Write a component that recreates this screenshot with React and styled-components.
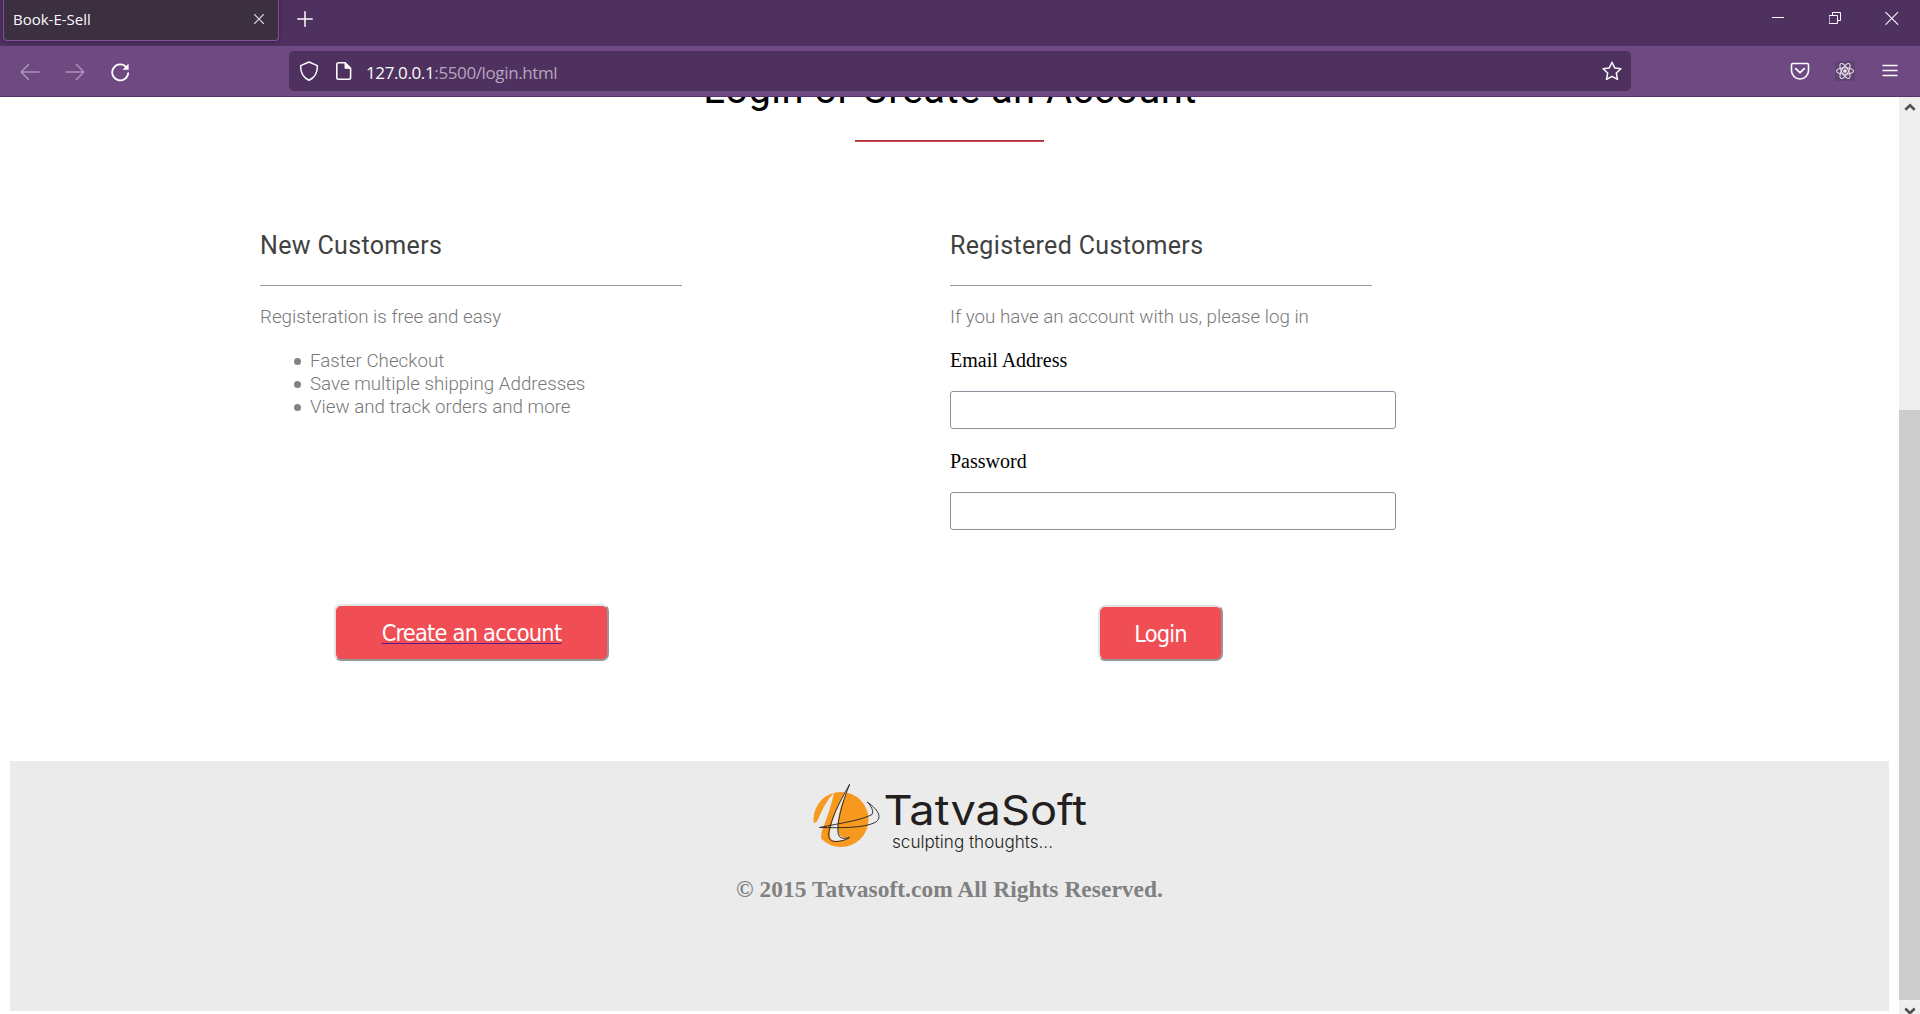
import React from 'react';
import styled, { createGlobalStyle } from 'styled-components';

const GlobalStyle = createGlobalStyle`
  *, *::before, *::after { box-sizing: border-box; }
  body { margin: 0; background: #fff; overflow: hidden; }
`;

const Window = styled.div`
  height: 1014px;
  display: flex;
  flex-direction: column;
  overflow: hidden;
  font-family: 'Liberation Serif', 'Times New Roman', serif;
  font-size: 20px;
  line-height: 23px;
`;

const TabStrip = styled.div`
  flex: none;
  height: 46px;
  display: flex;
  align-items: flex-start;
  justify-content: space-between;
  background: #4f315f;
`;

const TabGroup = styled.div`
  display: flex;
`;

const Tab = styled.div`
  width: 276px;
  height: 41px;
  margin-left: 3px;
  padding: 0 13px 3px 9px;
  display: flex;
  align-items: center;
  justify-content: space-between;
  background: #3b2f40;
  border: 1px solid #8350a0;
  border-top: 0;
  border-radius: 0 0 4px 4px;
  box-shadow: 0 0 5px rgba(0, 0, 0, 0.35);
  color: #fbfbfe;
  font: 15px/20px 'Open Sans', sans-serif;
`;

const NewTab = styled.div`
  margin: 11px 0 0 18px;
  display: flex;
`;

const WindowControls = styled.div`
  display: flex;
  gap: 43px;
  padding: 11px 21px 0 0;
`;

const NavBar = styled.div`
  flex: none;
  height: 51px;
  display: flex;
  align-items: center;
  padding: 0 20px 0 20px;
  background: #6f4a82;
  border-bottom: 1px solid #54346a;
`;

const NavButtons = styled.div`
  width: 269px;
  padding-top: 1px;
  display: flex;
  gap: 25px;
`;

const UrlBar = styled.div`
  width: 1342px;
  height: 40px;
  padding: 0 9px 0 10px;
  display: flex;
  align-items: center;
  background: #4f315f;
  border-radius: 5px;
`;

const UrlIcons = styled.div`
  display: flex;
  gap: 15px;
  width: 67px;
`;

const Url = styled.div`
  flex: 1;
  padding-top: 4px;
  color: #b7a4c0;
  font: 17px/24px 'Open Sans', sans-serif;
  letter-spacing: -0.38px;
`;

const Host = styled.span`
  color: #fbfbfe;
`;

const Tools = styled.div`
  margin-left: auto;
  display: flex;
  align-items: center;
  gap: 25px;
`;

const ExtensionBadge = styled.div`
  width: 20px;
  height: 20px;
  display: flex;
  border-radius: 2px;
  background: #5f4370;
`;

const Viewport = styled.div`
  flex: 1;
  min-height: 0;
  display: flex;
`;

const Page = styled.div`
  flex: 1;
  display: flex;
  flex-direction: column;
  padding: 0 10px;
  overflow: hidden;
`;

const TitleBlock = styled.div`
  flex: none;
  display: flex;
  flex-direction: column;
  align-items: center;
`;

const Title = styled.h1`
  margin: -29px 0 0;
  padding-left: 1px;
  font: 400 40px/44px Roboto, sans-serif;
  letter-spacing: 0.4px;
  color: #000;
`;

const TitleRule = styled.div`
  width: 189px;
  height: 2px;
  margin-top: 28px;
  background: #d9474f;
  border-top: 1px solid #9c3036;
`;

const Columns = styled.div`
  flex: none;
  display: grid;
  grid-template-columns: 690px 1fr;
  margin: 89px 0 0 250px;
  height: 430px;
`;

const Column = styled.section`
  display: flex;
  flex-direction: column;
  align-items: flex-start;
`;

const ColumnTitle = styled.h2`
  margin: 0;
  font: 400 25px/29px Roboto, sans-serif;
  letter-spacing: 0.34px;
  color: #414141;
`;

const Rule = styled.div`
  width: 422px;
  height: 1px;
  margin: 25px 0 20px;
  background: #a2949b;
`;

const Note = styled.p`
  margin: 0;
  font: 300 18.75px/23px Roboto, sans-serif;
  color: #787878;
`;

const Perks = styled.ul`
  margin: 21px 0 0;
  padding-left: 34px;
  list-style: none;
  font: 300 18.75px/23px Roboto, sans-serif;
  color: #787878;
`;

const Perk = styled.li`
  display: flex;
  align-items: center;

  &::before {
    content: '';
    width: 7px;
    height: 7px;
    margin-right: 9px;
    border-radius: 50%;
    background: #828282;
  }
`;

const Label = styled.label`
  margin-top: ${(p) => p.$top}px;
  color: #000;
`;

const Field = styled.input`
  width: 446px;
  height: 38px;
  margin-top: 19px;
  border: 1px solid #8f8f9d;
  border-radius: 3px;
  background: #fff;
`;

const Button = styled.button`
  width: ${(p) => p.$width}px;
  height: ${(p) => p.$height}px;
  margin: auto 0 0 ${(p) => p.$left}px;
  padding: 1px 0 0;
  background: #f14d54;
  border: 2px solid;
  border-color: #e3e3e3 #979797 #979797 #e3e3e3;
  border-radius: 7px;
  color: #fff;
  font-family: 'DejaVu Sans Condensed', 'DejaVu Sans', sans-serif;
  font-stretch: condensed;
  font-size: 23.4px;
  line-height: 30px;
  letter-spacing: -0.8px;
`;

const ButtonLink = styled.a`
  color: #fff;
  text-decoration: underline;
  text-decoration-color: #551a8b;
  text-decoration-thickness: 1px;
  text-underline-offset: 2px;
`;

const Footer = styled.footer`
  flex: none;
  height: 250px;
  margin-top: 100px;
  padding-top: 17px;
  display: flex;
  flex-direction: column;
  align-items: center;
  background: #ebebeb;
`;

const Copyright = styled.h3`
  margin: 28px 0 0;
  font-size: 23.4px;
  line-height: 27px;
  font-weight: 700;
  letter-spacing: 0.05px;
  color: #808080;
`;

const Scrollbar = styled.div`
  flex: none;
  width: 21px;
  display: flex;
  flex-direction: column;
  align-items: center;
  background: #efefef;
`;

const ScrollArrow = styled.svg`
  flex: none;
  margin: 5px 0 0;
`;

const Thumb = styled.div`
  flex: none;
  width: 21px;
  height: 590px;
  margin: 298px 0 2px;
  background: #cccccc;
`;

const Icon = ({ size = 20, w, h, children, stroke = '#fbfbfe', sw = 1.6, opacity }) => (
  <svg width={w || size} height={h || size} viewBox={`0 0 ${w || size} ${h || size}`} fill="none"
    stroke={stroke} strokeWidth={sw} strokeLinecap="round" strokeLinejoin="round" opacity={opacity}>
    {children}
  </svg>
);

const Logo = () => (
  <svg width="276" height="70" viewBox="812 778 276 70" overflow="visible">
    <circle cx="841" cy="819.5" r="27.5" fill="#f7981f" />
    <path d="M810 824 L814 823 L817 821.5 Q825 802 834 792.5 Q831 808 821.5 832 L821 841 L810 843Z" fill="#ebebeb" />
    <path d="M849.5 784.5 Q838 803 832 823 Q826 842 837 841 Q843 841 849 837.500 Q840 839 838 832 Q836.500 824 841 806Z" fill="#ebebeb" />
    <g fill="none" stroke="#231f20" strokeWidth="0.9" strokeLinecap="round">
      <path d="M849.500 784.500 C842 798 834 812 830 827 C827 838 829 841.500 836 841.500 C841 841.500 846 840 849.500 837.500 C843 839 838.500 839 838 832 C837 823 841 806 849.500 784.500" />
      <path d="M867.700 802.300 C871 806 874 811 872 814.500 C862 820 842 823 819.500 827.500 C842 828 864 828 875 822.500 C882 818.500 880 811 867.700 802.300" />
    </g>
    <text x="883.500" y="824.7" textLength="203.500" lengthAdjust="spacingAndGlyphs" fill="#231f20"
      fontFamily="Inter, sans-serif" fontSize="41">TatvaSoft</text>
    <text x="892" y="847.8" textLength="161" lengthAdjust="spacingAndGlyphs" fill="#231f20"
      fontFamily="Inter, sans-serif" fontWeight="300" fontSize="17">sculpting thoughts...</text>
  </svg>
);

export default function App() {
  return (
    <Window>
      <GlobalStyle />
      <TabStrip>
        <TabGroup>
          <Tab>
            Book-E-Sell
            <Icon size={12} sw={1.1} stroke="#d5d1d8"><path d="M1.500 1.500l9 9M10.500 1.500l-9 9" /></Icon>
          </Tab>
          <NewTab>
            <Icon size={16} sw={1.5}><path d="M8 .8v14.400M.8 8h14.400" /></Icon>
          </NewTab>
        </TabGroup>
        <WindowControls>
          <Icon w={14} h={14} sw={1}><path d="M0 6.500h12" strokeLinecap="butt" /></Icon>
          <Icon w={13} h={14} sw={1}>
            <path d="M.5 4.500h8v8h-8zM3.500 4.500v-3h8v8h-3" strokeLinejoin="miter" />
          </Icon>
          <Icon w={14} h={14} sw={1.1}><path d="M.8 1.300l12 12M12.800 1.300l-12 12" /></Icon>
        </WindowControls>
      </TabStrip>
      <NavBar>
        <NavButtons>
          <Icon sw={1.5} opacity=".42"><path d="M19 10H1.500M8.500 2.500L1.200 10l7.300 7.500" /></Icon>
          <Icon sw={1.5} opacity=".42"><path d="M1 10h17.500M11.500 2.500l7.300 7.500-7.300 7.500" /></Icon>
          <Icon sw={1.8}>
            <path d="M16.300 5.200a8 8 0 1 0 1.900 6" />
            <path d="M18.600 1.600v6.200h-6z" fill="#fbfbfe" stroke="none" />
          </Icon>
        </NavButtons>
        <UrlBar>
          <UrlIcons>
            <Icon sw={1.5}><path d="M10 1L18.300 4.600C18.600 11 16 16.500 10 19.200C4 16.500 1.400 11 1.700 4.600Z" /></Icon>
            <Icon sw={1.6}>
              <path d="M4.500 1.800h6.500l5.600 5.500v9.200a1.700 1.700 0 0 1-1.700 1.700H4.500a1.700 1.700 0 0 1-1.700-1.700v-13a1.700 1.700 0 0 1 1.700-1.700z" />
              <path d="M11 1.800v5.500h5.600z" fill="#fbfbfe" strokeWidth="1" />
            </Icon>
          </UrlIcons>
          <Url><Host>127.0.0.1</Host>:5500/login.html</Url>
          <Icon sw={1.5}>
            <path d="M10 1.200l2.700 5.700 6.200.8-4.600 4.300 1.200 6.300L10 15.300l-5.500 3 1.200-6.300L1.100 7.700l6.200-.8z" />
          </Icon>
        </UrlBar>
        <Tools>
          <Icon sw={1.6}>
            <path d="M2.800 2.500h14.400a1.300 1.300 0 0 1 1.300 1.300v5.700a8.500 8.500 0 0 1-17 0V3.800a1.300 1.300 0 0 1 1.300-1.300z" />
            <path d="M5.700 7.700l4.300 4 4.300-4" strokeWidth="1.8" />
          </Icon>
          <ExtensionBadge>
            <Icon sw={1.1} stroke="#e4dde8">
              <ellipse cx="10" cy="10" rx="8.500" ry="3.300" />
              <ellipse cx="10" cy="10" rx="8.500" ry="3.300" transform="rotate(60 10 10)" />
              <ellipse cx="10" cy="10" rx="8.500" ry="3.300" transform="rotate(120 10 10)" />
              <circle cx="10" cy="10" r="1.300" fill="#fff" />
            </Icon>
          </ExtensionBadge>
          <Icon sw={1.5}><path d="M3 4.500h14M3 9.500h14M3 14.500h14" /></Icon>
        </Tools>
      </NavBar>
      <Viewport>
        <Page>
          <TitleBlock>
            <Title>Login or Create an Account</Title>
            <TitleRule />
          </TitleBlock>
          <Columns>
            <Column>
              <ColumnTitle>New Customers</ColumnTitle>
              <Rule />
              <Note>Registeration is free and easy</Note>
              <Perks>
                <Perk>Faster Checkout</Perk>
                <Perk>Save multiple shipping Addresses</Perk>
                <Perk>View and track orders and more</Perk>
              </Perks>
              <Button $width={275} $height={57} $left={74}>
                <ButtonLink>Create an account</ButtonLink>
              </Button>
            </Column>
            <Column>
              <ColumnTitle>Registered Customers</ColumnTitle>
              <Rule />
              <Note>If you have an account with us, please log in</Note>
              <Label $top={20}>Email Address</Label>
              <Field type="text" />
              <Label $top={21}>Password</Label>
              <Field type="password" />
              <Button $width={125} $height={56} $left={148}>Login</Button>
            </Column>
          </Columns>
          <Footer>
            <Logo />
            <Copyright>© 2015 Tatvasoft.com All Rights Reserved.</Copyright>
          </Footer>
        </Page>
        <Scrollbar>
          <ScrollArrow width="12" height="10" viewBox="0 0 12 10">
            <path d="M1.300 7.800L6 3.200l4.700 4.600" fill="none" stroke="#505050" strokeWidth="2.600" />
          </ScrollArrow>
          <Thumb />
          <ScrollArrow width="12" height="10" viewBox="0 0 12 10">
            <path d="M1.300 1.500L6 6.200l4.700-4.700" fill="none" stroke="#505050" strokeWidth="2.600" />
          </ScrollArrow>
        </Scrollbar>
      </Viewport>
    </Window>
  );
}
